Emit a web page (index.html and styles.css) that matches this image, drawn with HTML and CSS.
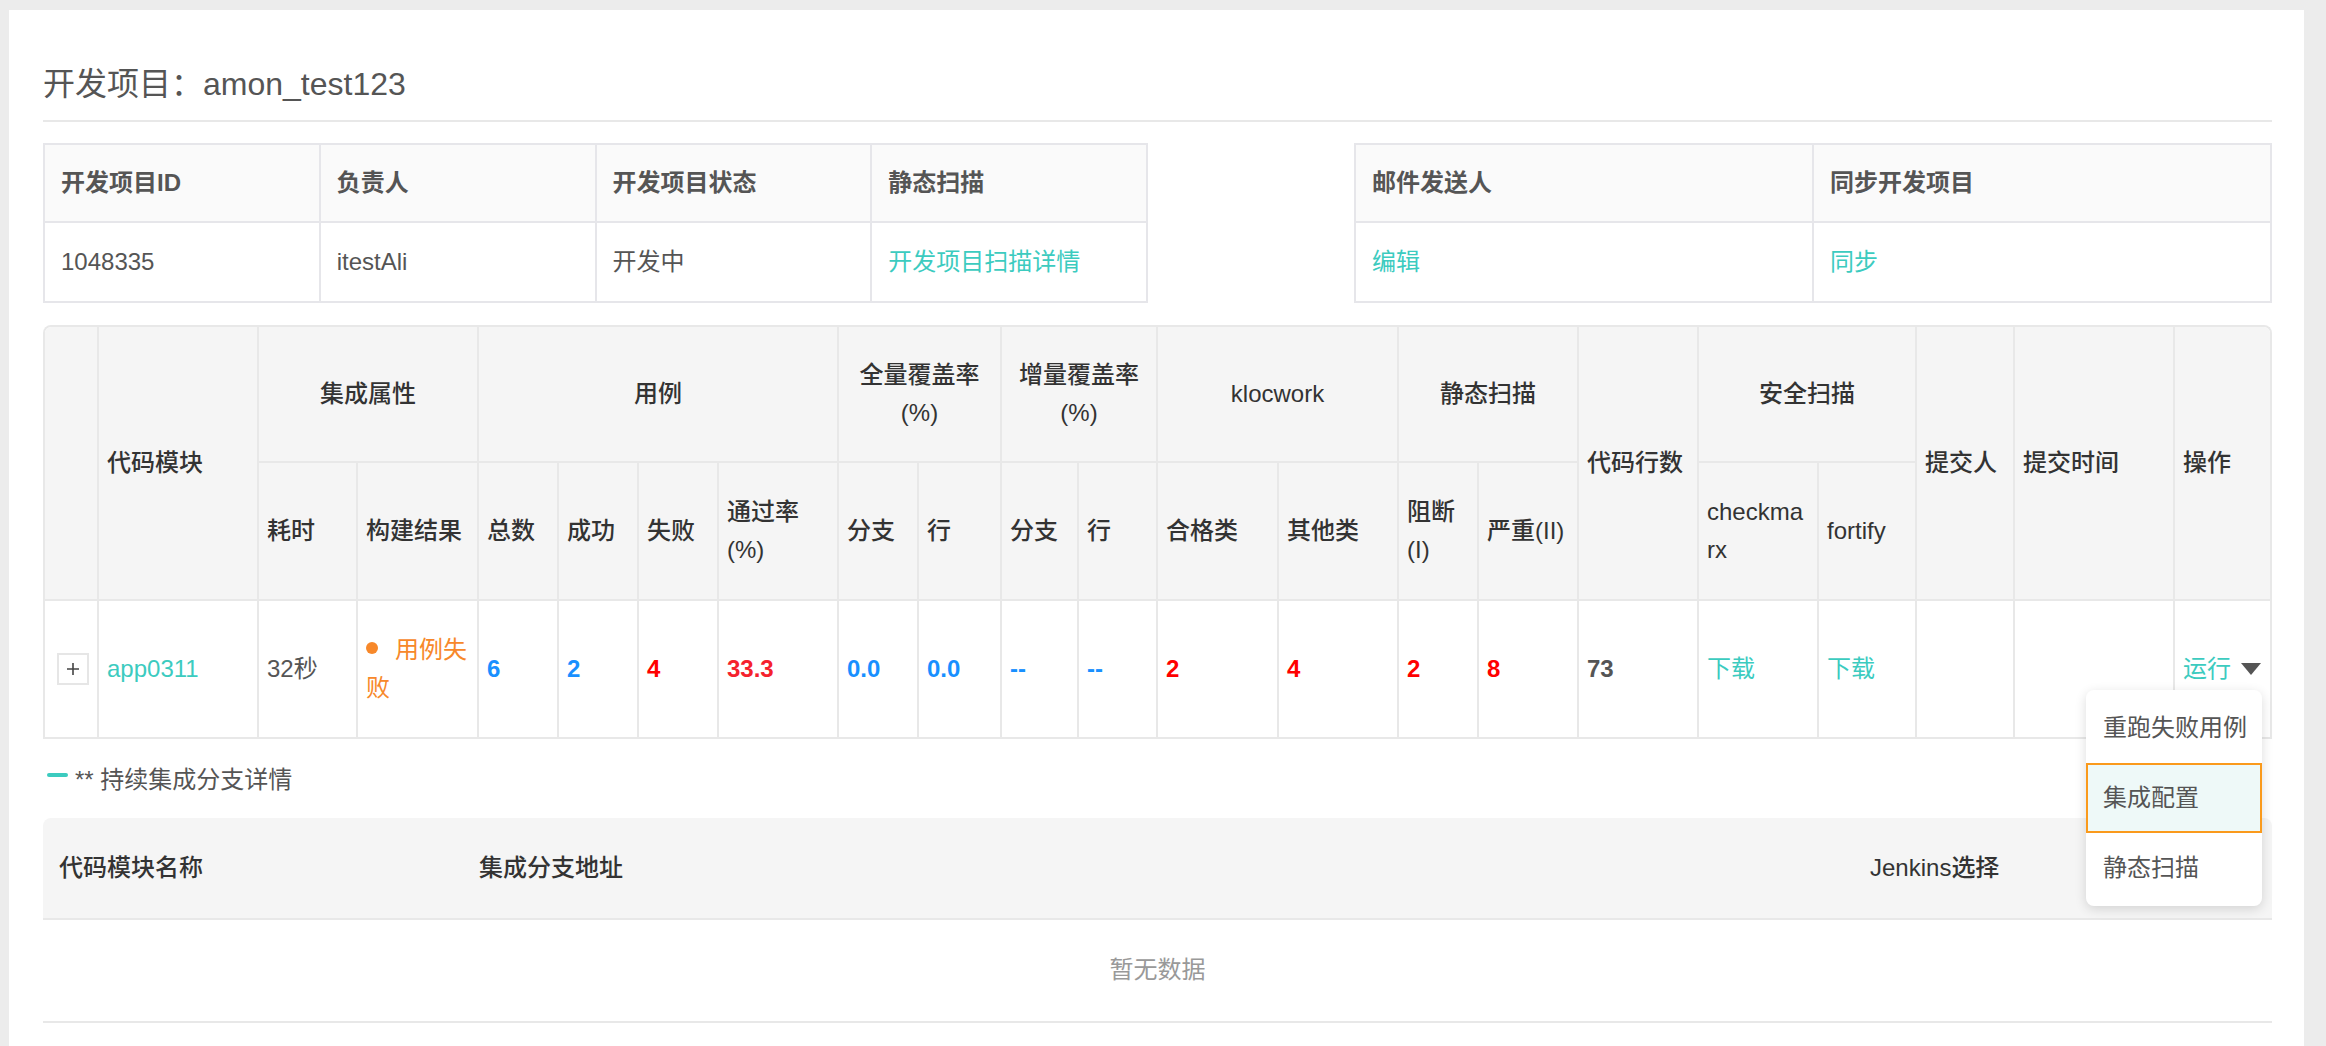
FILE: index.html
```html
<!DOCTYPE html>
<html lang="zh-CN">
<head>
<meta charset="utf-8">
<title>开发项目</title>
<link rel="stylesheet" href="styles.css">
</head>
<body>
<div class="panel">
  <h1 class="title">开发项目：amon_test123</h1>

  <div class="info-row">
    <table class="info info-left">
      <tr>
        <th>开发项目ID</th>
        <th>负责人</th>
        <th>开发项目状态</th>
        <th>静态扫描</th>
      </tr>
      <tr>
        <td>1048335</td>
        <td>itestAli</td>
        <td>开发中</td>
        <td><span class="link">开发项目扫描详情</span></td>
      </tr>
    </table>
    <table class="info info-right">
      <tr>
        <th>邮件发送人</th>
        <th>同步开发项目</th>
      </tr>
      <tr>
        <td><span class="link">编辑</span></td>
        <td><span class="link">同步</span></td>
      </tr>
    </table>
  </div>

  <div class="grid-wrap">
    <table class="grid">
      <colgroup>
        <col class="c54"><col class="c160"><col class="c99"><col class="c121">
        <col class="c80"><col class="c80"><col class="c80"><col class="c120">
        <col class="c80"><col class="c83"><col class="c77"><col class="c79">
        <col class="c121"><col class="c120"><col class="c80"><col class="c100">
        <col class="c120"><col class="c120"><col class="c98"><col class="c98">
        <col class="c160"><col class="c95">
      </colgroup>
      <thead>
        <tr class="head-top">
          <th rowspan="2" class="corner-l"></th>
          <th rowspan="2">代码模块</th>
          <th colspan="2" class="center">集成属性</th>
          <th colspan="4" class="center">用例</th>
          <th colspan="2" class="center">全量覆盖率<br>(%)</th>
          <th colspan="2" class="center">增量覆盖率<br>(%)</th>
          <th colspan="2" class="center">klocwork</th>
          <th colspan="2" class="center">静态扫描</th>
          <th rowspan="2">代码行数</th>
          <th colspan="2" class="center">安全扫描</th>
          <th rowspan="2">提交人</th>
          <th rowspan="2">提交时间</th>
          <th rowspan="2" class="last corner-r">操作</th>
        </tr>
        <tr>
          <th>耗时</th>
          <th>构建结果</th>
          <th>总数</th>
          <th>成功</th>
          <th>失败</th>
          <th>通过率<br>(%)</th>
          <th>分支</th>
          <th>行</th>
          <th>分支</th>
          <th>行</th>
          <th>合格类</th>
          <th>其他类</th>
          <th>阻断<br>(I)</th>
          <th>严重(II)</th>
          <th>checkma<br>rx</th>
          <th>fortify</th>
        </tr>
      </thead>
      <tbody>
        <tr>
          <td class="expand-cell">
            <span class="expand-btn">
              <svg width="14" height="14" viewBox="0 0 14 14"><path d="M7 1v12M1 7h12" stroke="#444" stroke-width="1.6" fill="none"/></svg>
            </span>
          </td>
          <td><span class="link">app0311</span></td>
          <td>32秒</td>
          <td class="status"><span class="dot"></span>用例失败</td>
          <td class="num blue">6</td>
          <td class="num blue">2</td>
          <td class="num red">4</td>
          <td class="num pink">33.3</td>
          <td class="num blue">0.0</td>
          <td class="num blue">0.0</td>
          <td class="num blue">--</td>
          <td class="num blue">--</td>
          <td class="num red">2</td>
          <td class="num red">4</td>
          <td class="num red">2</td>
          <td class="num red">8</td>
          <td class="num">73</td>
          <td><span class="link">下载</span></td>
          <td><span class="link">下载</span></td>
          <td></td>
          <td></td>
          <td class="last op">
            <span class="link">运行</span><span class="caret"></span>
            <div class="menu">
              <div class="menu-item">重跑失败用例</div>
              <div class="menu-item active">集成配置</div>
              <div class="menu-item">静态扫描</div>
            </div>
          </td>
        </tr>
      </tbody>
    </table>
  </div>

  <div class="sub-title"><span class="dash"></span><span class="stars">**</span>&nbsp;持续集成分支详情</div>

  <table class="branch">
    <colgroup>
      <col class="b1"><col class="b2"><col class="b3">
    </colgroup>
    <thead>
      <tr>
        <th>代码模块名称</th>
        <th>集成分支地址</th>
        <th>Jenkins选择</th>
      </tr>
    </thead>
    <tbody>
      <tr>
        <td colspan="3" class="empty">暂无数据</td>
      </tr>
    </tbody>
  </table>
</div>
</body>
</html>
```

FILE: styles.css
```css
* { box-sizing: border-box; }
html, body { margin: 0; padding: 0; }
body {
  background: #ececec;
  font-family: "Liberation Sans", "Noto Sans CJK SC", sans-serif;
  font-size: 24px;
  line-height: 38px;
  color: #555;
}
.panel {
  margin: 10px 22px 0 9px;
  background: #fff;
  padding: 0 32px 40px 34px;
  min-height: 1100px;
}
.title {
  margin: 0;
  height: 112px;
  font-size: 32px;
  line-height: 48px;
  font-weight: normal;
  color: #555;
  padding: 50px 0 0;
  border-bottom: 2px solid #e8e8e8;
  overflow: hidden;
}
.link { color: #3ccbbf; }

/* info tables */
.info-row {
  display: flex;
  justify-content: space-between;
  margin-top: 21px;
}
.info {
  border-collapse: collapse;
  table-layout: fixed;
  border: 2px solid #e6e6ea;
}
.info-left { width: 1105px; }
.info-right { width: 918px; }
.info th, .info td {
  border: 2px solid #e6e6ea;
  text-align: left;
  line-height: 38px;
  padding: 19px 16px;
}
.info td { padding: 20px 16px; }
.info th {
  background: #fafafa;
  font-weight: bold;
  color: #555;
}

/* main grid */
.grid-wrap {
  margin-top: 22px;
  border: 2px solid #e8e8e8;
  border-bottom: none;
  border-radius: 8px 8px 0 0;
}
.grid {
  width: 2225px;
  table-layout: fixed;
  border-collapse: separate;
  border-spacing: 0;
}
.c54 { width: 54px; }
.c160 { width: 160px; }
.c99 { width: 99px; }
.c121 { width: 121px; }
.c80 { width: 80px; }
.c120 { width: 120px; }
.c83 { width: 83px; }
.c77 { width: 77px; }
.c79 { width: 79px; }
.c100 { width: 100px; }
.c98 { width: 98px; }
.c95 { width: 95px; }

.grid th, .grid td {
  border-right: 2px solid #e8e8e8;
  border-bottom: 2px solid #e8e8e8;
  padding: 30px 8px;
  line-height: 38px;
  text-align: left;
  vertical-align: middle;
  word-break: break-all;
}
.grid .head-top th { padding-top: 29px; padding-bottom: 29px; }
.grid th {
  background: #f5f5f5;
  color: #333;
  font-weight: 500;
}
.grid th.center { text-align: center; }
.grid th.last, .grid td.last { border-right: none; }
.grid th.corner-l { border-top-left-radius: 6px; }
.grid th.corner-r { border-top-right-radius: 6px; }
.grid td { background: #fff; color: #555; }

.expand-cell { padding-left: 12px !important; padding-right: 0 !important; }
.expand-btn {
  display: flex;
  align-items: center;
  justify-content: center;
  width: 32px;
  height: 32px;
  border: 2px solid #e6e6e6;
  background: #fff;
}
.status { color: #f7882a !important; }
.dot {
  display: inline-block;
  width: 12px;
  height: 12px;
  border-radius: 50%;
  background: #f7882a;
  margin-right: 17px;
  vertical-align: 4px;
}
.num { font-weight: bold; }
.blue { color: #1890ff !important; }
.red { color: #ff0000 !important; }
.pink { color: #f5222d !important; }

.op { position: relative; white-space: nowrap; }
.caret {
  display: inline-block;
  width: 0;
  height: 0;
  border-left: 10px solid transparent;
  border-right: 10px solid transparent;
  border-top: 12px solid #555;
  margin-left: 10px;
  vertical-align: 2px;
}
.menu {
  position: absolute;
  top: 89px;
  right: 8px;
  width: 176px;
  background: #fff;
  border-radius: 8px;
  box-shadow: 0 3px 12px rgba(0, 0, 0, 0.14);
  padding: 3px 0;
  z-index: 10;
}
.menu-item {
  padding: 16px 17px;
  line-height: 38px;
  color: #555;
  white-space: nowrap;
}
.menu-item.active {
  background: #eef9f8;
  border: 2px solid #fa9a1c;
  padding: 14px 15px;
}

/* sub title */
.sub-title {
  margin-top: 22px;
  display: flex;
  align-items: center;
  line-height: 38px;
  color: #555;
}
.dash {
  width: 21px;
  height: 4px;
  border-radius: 2px;
  background: #3ccbbf;
  margin: 0 7px 10px 4px;
}
.stars { color: #555; }

/* branch table */
.branch {
  margin-top: 19px;
  width: 100%;
  table-layout: fixed;
  border-collapse: separate;
  border-spacing: 0;
}
.b1 { width: 420px; }
.b2 { width: 1391px; }
.b3 { width: 418px; }
.branch th {
  background: #f5f5f5;
  color: #333;
  font-weight: 500;
  text-align: left;
  padding: 31px 16px;
  line-height: 38px;
  border-bottom: 2px solid #e8e8e8;
}
.branch th:first-child { border-top-left-radius: 8px; }
.branch th:last-child { border-top-right-radius: 8px; }
.branch td.empty {
  text-align: center;
  color: #999;
  padding: 31px 16px 32px;
  line-height: 38px;
  border-bottom: 2px solid #e8e8e8;
}
```
